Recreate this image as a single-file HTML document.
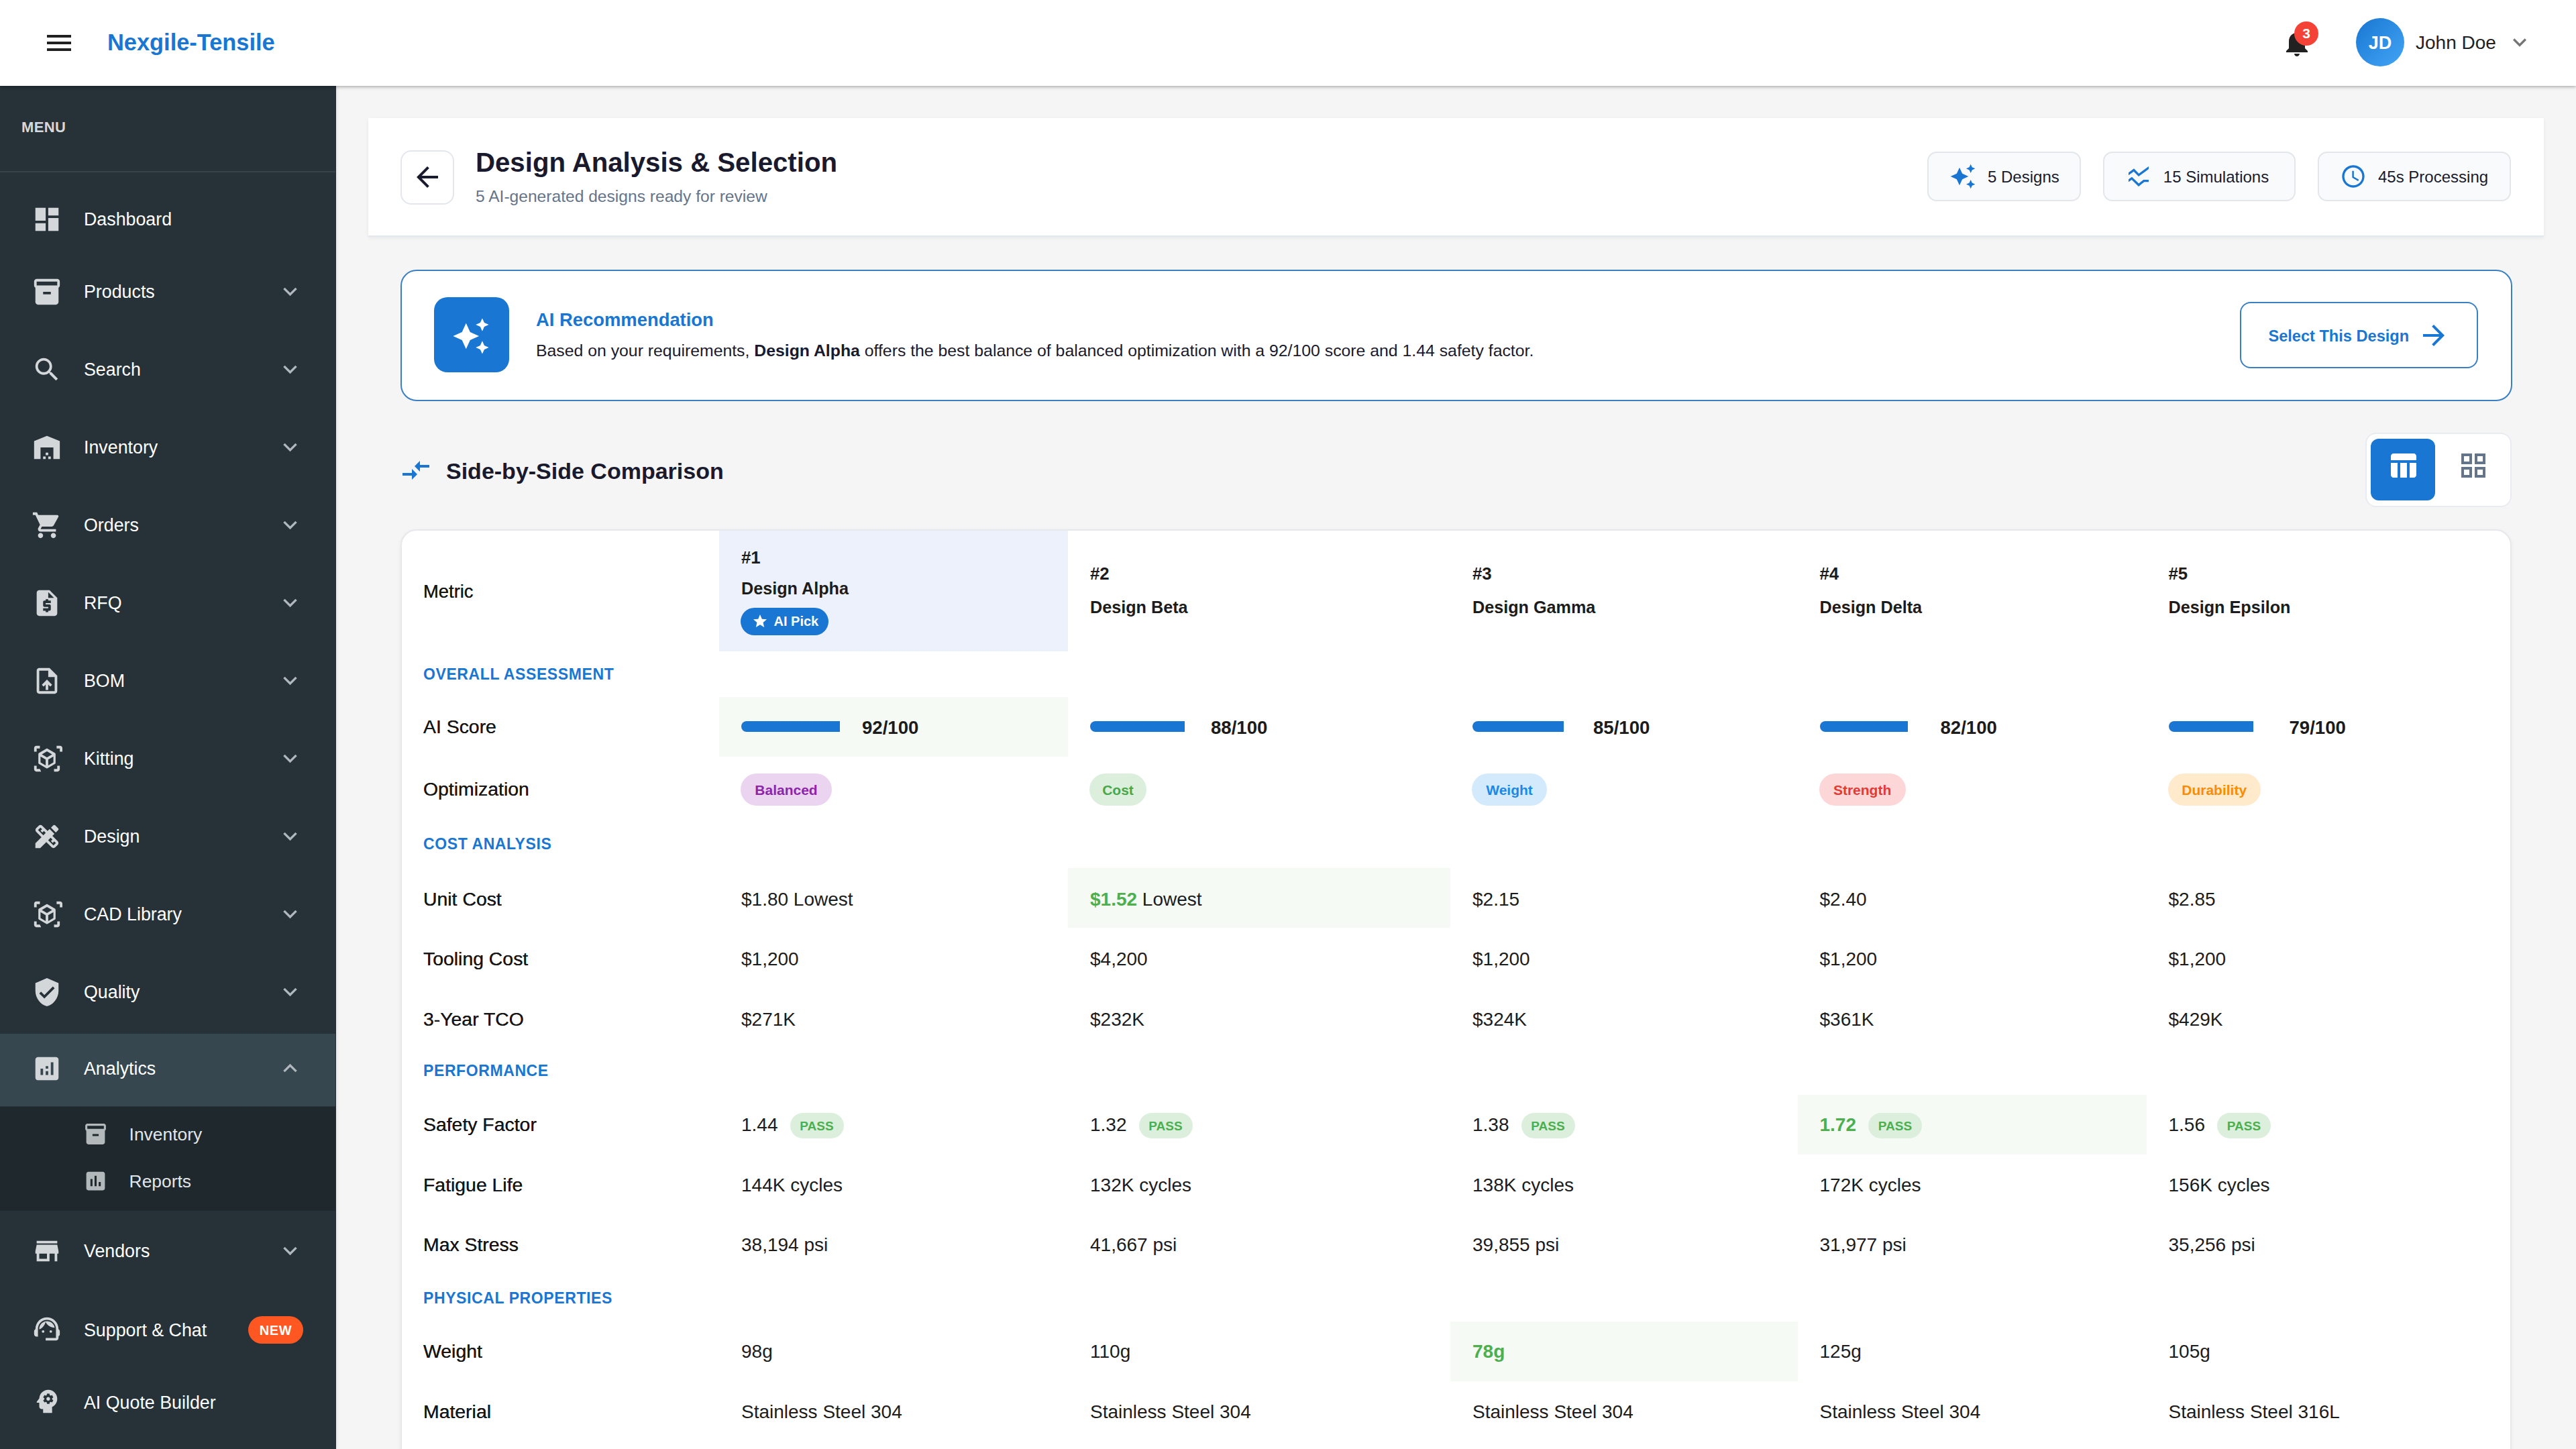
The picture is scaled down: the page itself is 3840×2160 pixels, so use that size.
<!DOCTYPE html>
<html>
<head>
<meta charset="utf-8">
<style>
html { zoom: 2; }
@media (max-width: 2500px) { html { zoom: 1; } }
html, body { margin: 0; padding: 0; width: 1920px; height: 1080px; overflow: hidden; background: #f5f5f5; }
body { font-family: "Liberation Sans", sans-serif; color: #1a1a2e; position: relative; }
.abs { position: absolute; }
svg { display: block; }
.nw { white-space: nowrap; }

/* header */
#hdr { position: absolute; left: 0; top: 0; width: 1920px; height: 64px; background: #fff; z-index: 5;
  box-shadow: 0 0.5px 3px rgba(0,0,0,0.28), 0 1px 1.5px rgba(0,0,0,0.08); }
.bar { position: absolute; left: 35px; width: 18px; height: 2px; background: #212121; }

/* sidebar */
#side { position: absolute; left: 0; top: 64px; width: 250.5px; height: 1016px; background: #263238; z-index: 3; box-shadow: 1px 0 2px rgba(0,0,0,0.07); }
#side .menu { position: absolute; left: 16px; top: 23.2px; font-size: 11px; line-height: 16px; font-weight: 700; letter-spacing: 0.2px; color: #d5d9dd; }
#side .div { position: absolute; left: 0; top: 63.5px; width: 250px; height: 1px; background: #34424a; }
.item { position: absolute; left: 0; width: 250px; height: 54px; }
.item.act { background: #37474f; }
.item .ic { position: absolute; left: 23.6px; top: 14.25px; width: 23px; height: 23px; fill: #d4d7da; }
.item .tx { position: absolute; left: 62.5px; top: -1px; line-height: 54px; font-size: 13.4px; color: #fff; white-space: nowrap; }
.item .chev { position: absolute; left: 206px; top: 15.5px; width: 20.5px; height: 20.5px; fill: #b0b8bd; }
.newb { position: absolute; left: 185px; top: 16.5px; width: 41px; height: 20.5px; border-radius: 10.25px; background: #ff5722; color: #fff; font-size: 10px; font-weight: 700; line-height: 21.5px; text-align: center; letter-spacing: 0.3px; }
.sub { position: absolute; left: 0; width: 250px; height: 77.25px; background: #1e282d; }
.sitem { position: absolute; left: 0; width: 250px; height: 35px; }
.sic { position: absolute; left: 61.8px; top: 11.1px; width: 18.5px; height: 18.5px; fill: #b3b8bb; }
.stx { position: absolute; left: 96.3px; top: 10.3px; font-size: 13.2px; line-height: 20px; color: #e3e6e9; white-space: nowrap; }
.t { position: absolute; white-space: nowrap; }
.pass { display: inline-block; vertical-align: 0.5px; margin-left: 9px; width: 40px; height: 19px; border-radius: 9.5px; background: #dbefdc; color: #4caf50; font-size: 9.5px; font-weight: 700; line-height: 20px; text-align: center; }

.item.lo .tx { top: 0px; }

</style>
</head>
<body>
<div id="hdr">
  <div class="bar" style="top:26px"></div>
  <div class="bar" style="top:31px"></div>
  <div class="bar" style="top:36px"></div>
  <div class="abs nw" style="left:80px; top:19.5px; font-size:17.2px; line-height:24px; font-weight:700; color:#1976d2;">Nexgile-Tensile</div>
  <svg class="abs" style="left:1700px; top:20px; width:24px; height:24px; fill:#212121" viewBox="0 0 24 24"><path d="M12 22c1.1 0 2-.9 2-2h-4c0 1.1.89 2 2 2m6-6v-5c0-3.07-1.64-5.64-4.5-6.32V4c0-.83-.67-1.5-1.5-1.5s-1.5.67-1.5 1.5v.68C7.63 5.36 6 7.92 6 11v5l-2 2v1h16v-1z"/></svg>
  <div class="abs" style="left:1710px; top:16px; width:18px; height:18px; border-radius:9px; background:#f44336; color:#fff; font-size:10.5px; font-weight:700; line-height:18px; text-align:center;">3</div>
  <div class="abs" style="left:1756px; top:13.65px; width:36px; height:36px; border-radius:18px; background:linear-gradient(135deg,#1976d2 0%,#42a5f5 100%); color:#fff; font-size:13.5px; font-weight:700; line-height:37px; text-align:center;">JD</div>
  <div class="abs nw" style="left:1800.5px; top:22px; font-size:14px; line-height:20px; color:#212121;">John Doe</div>
  <svg class="abs" style="left:1868px; top:21.25px; width:20px; height:20px; fill:#757575" viewBox="0 0 24 24"><path d="M16.59 8.59 12 13.17 7.41 8.59 6 10l6 6 6-6z"/></svg>
</div>

<div id="side">
<div class="menu">MENU</div>
<div class="div"></div>
<div class="item" style="top:73.5px"><svg class="ic" viewBox="0 0 24 24"><path d="M3 13h8V3H3zm0 8h8v-6H3zm10 0h8V11h-8zm0-18v6h8V3z"/></svg><div class="tx">Dashboard</div></div>
<div class="item" style="top:127.5px"><svg class="ic" viewBox="0 0 24 24"><path d="M20 2H4c-1 0-2 .9-2 2v3.01c0 .72.43 1.34 1 1.69V20c0 1.1 1.1 2 2 2h14c.9 0 2-.9 2-2V8.7c.57-.35 1-.97 1-1.69V4c0-1.1-1-2-2-2m-5 12H9v-2h6zm5-7H4V4l16-.02z"/></svg><div class="tx">Products</div><svg class="chev" viewBox="0 0 24 24"><path d="M16.59 8.59 12 13.17 7.41 8.59 6 10l6 6 6-6z"/></svg></div>
<div class="item" style="top:185.5px"><svg class="ic" viewBox="0 0 24 24"><path d="M15.5 14h-.79l-.28-.27C15.41 12.59 16 11.11 16 9.5 16 5.91 13.09 3 9.5 3S3 5.91 3 9.5 5.91 16 9.5 16c1.61 0 3.09-.59 4.23-1.57l.27.28v.79l5 4.99L20.49 19zm-6 0C7.01 14 5 11.99 5 9.5S7.01 5 9.5 5 14 7.01 14 9.5 11.99 14 9.5 14"/></svg><div class="tx">Search</div><svg class="chev" viewBox="0 0 24 24"><path d="M16.59 8.59 12 13.17 7.41 8.59 6 10l6 6 6-6z"/></svg></div>
<div class="item" style="top:243.5px"><svg class="ic" viewBox="0 0 24 24"><path d="M22 21V7L12 3 2 7v14h5v-9h10v9zm-11-2H9v2h2zm2-3h-2v2h2zm2 3h-2v2h2z"/></svg><div class="tx">Inventory</div><svg class="chev" viewBox="0 0 24 24"><path d="M16.59 8.59 12 13.17 7.41 8.59 6 10l6 6 6-6z"/></svg></div>
<div class="item" style="top:301.5px"><svg class="ic" viewBox="0 0 24 24"><path d="M7 18c-1.1 0-1.99.9-1.99 2S5.9 22 7 22s2-.9 2-2-.9-2-2-2M1 2v2h2l3.6 7.59-1.35 2.45c-.16.28-.25.61-.25.96 0 1.1.9 2 2 2h12v-2H7.42c-.14 0-.25-.11-.25-.25l.03-.12.9-1.63h7.45c.75 0 1.41-.41 1.75-1.03l3.58-6.49c.08-.14.12-.31.12-.48 0-.55-.45-1-1-1H5.21l-.94-2zm16 16c-1.1 0-1.99.9-1.99 2s.89 2 1.99 2 2-.9 2-2-.9-2-2-2"/></svg><div class="tx">Orders</div><svg class="chev" viewBox="0 0 24 24"><path d="M16.59 8.59 12 13.17 7.41 8.59 6 10l6 6 6-6z"/></svg></div>
<div class="item" style="top:359.5px"><svg class="ic" viewBox="0 0 24 24"><path d="M14 2H6c-1.1 0-1.99.9-1.99 2L4 20c0 1.1.89 2 1.99 2H18c1.1 0 2-.9 2-2V8zm1 10h-4v1h3c.55 0 1 .45 1 1v3c0 .55-.45 1-1 1h-1v1h-2v-1H9v-2h4v-1h-3c-.55 0-1-.45-1-1v-3c0-.55.45-1 1-1h1V9h2v1h2zm-2-4V3.5L17.5 8z"/></svg><div class="tx">RFQ</div><svg class="chev" viewBox="0 0 24 24"><path d="M16.59 8.59 12 13.17 7.41 8.59 6 10l6 6 6-6z"/></svg></div>
<div class="item" style="top:417.5px"><svg class="ic" viewBox="0 0 24 24"><path d="M14 2H6c-1.1 0-1.99.9-1.99 2L4 20c0 1.1.89 2 1.99 2H18c1.1 0 2-.9 2-2V8zm4 18H6V4h7v5h5zM8 15.01l1.41 1.41L11 14.84V19h2v-4.16l1.59 1.59L16 15.01 12.01 11z"/></svg><div class="tx">BOM</div><svg class="chev" viewBox="0 0 24 24"><path d="M16.59 8.59 12 13.17 7.41 8.59 6 10l6 6 6-6z"/></svg></div>
<div class="item" style="top:475.5px"><svg class="ic" viewBox="0 0 24 24"><path d="M18.25 7.6 12.45 4.2c-.28-.16-.62-.16-.9 0L5.75 7.6c-.28.16-.45.46-.45.79v6.82c0 .33.17.63.45.79l5.8 3.4c.28.16.62.16.9 0l5.8-3.4c.28-.16.45-.46.45-.79V8.39c0-.33-.17-.63-.45-.79M11 17.25l-4-2.34v-4.6l4 2.34zm1-6.29L8.02 8.6 12 6.24l3.98 2.36zm5 3.95-4 2.34v-4.6l4-2.34zM2 6.5V3.75C2 2.78 2.78 2 3.75 2H6.5v2H4v2.5zm5.5 15.5H3.75C2.78 22 2 21.22 2 20.25V17.5h2V20h2.5zm12-20h2.75c.97 0 1.75.78 1.75 1.75V6.5h-2V4h-2.5zm2.5 15.5v2.75c0 .97-.78 1.75-1.75 1.75H17.5v-2H20v-2.5z"/></svg><div class="tx">Kitting</div><svg class="chev" viewBox="0 0 24 24"><path d="M16.59 8.59 12 13.17 7.41 8.59 6 10l6 6 6-6z"/></svg></div>
<div class="item" style="top:533.5px"><svg class="ic" viewBox="0 0 24 24"><path d="M16.24 11.51l1.57-1.57-3.75-3.75-1.57 1.57-4.14-4.13c-.78-.78-2.05-.78-2.83 0l-1.9 1.9c-.78.78-.78 2.05 0 2.83l4.13 4.13L3 17.25V21h3.75l4.76-4.76 4.13 4.13c.95.95 2.23.6 2.83 0l1.9-1.9c.78-.78.78-2.05 0-2.83zm-7.06-.44L5.04 6.94l1.89-1.9L8.2 6.31 7.02 7.5l1.41 1.41 1.19-1.19 1.45 1.45zm7.88 7.89-4.13-4.13 1.9-1.9 1.45 1.45-1.19 1.19 1.41 1.41 1.19-1.19 1.27 1.27zm3.65-11.92c.39-.39.39-1.02 0-1.41l-2.34-2.34c-.47-.47-1.12-.29-1.41 0l-1.83 1.83 3.75 3.75z"/></svg><div class="tx">Design</div><svg class="chev" viewBox="0 0 24 24"><path d="M16.59 8.59 12 13.17 7.41 8.59 6 10l6 6 6-6z"/></svg></div>
<div class="item" style="top:591.5px"><svg class="ic" viewBox="0 0 24 24"><path d="M18.25 7.6 12.45 4.2c-.28-.16-.62-.16-.9 0L5.75 7.6c-.28.16-.45.46-.45.79v6.82c0 .33.17.63.45.79l5.8 3.4c.28.16.62.16.9 0l5.8-3.4c.28-.16.45-.46.45-.79V8.39c0-.33-.17-.63-.45-.79M11 17.25l-4-2.34v-4.6l4 2.34zm1-6.29L8.02 8.6 12 6.24l3.98 2.36zm5 3.95-4 2.34v-4.6l4-2.34zM2 6.5V3.75C2 2.78 2.78 2 3.75 2H6.5v2H4v2.5zm5.5 15.5H3.75C2.78 22 2 21.22 2 20.25V17.5h2V20h2.5zm12-20h2.75c.97 0 1.75.78 1.75 1.75V6.5h-2V4h-2.5zm2.5 15.5v2.75c0 .97-.78 1.75-1.75 1.75H17.5v-2H20v-2.5z"/></svg><div class="tx">CAD Library</div><svg class="chev" viewBox="0 0 24 24"><path d="M16.59 8.59 12 13.17 7.41 8.59 6 10l6 6 6-6z"/></svg></div>
<div class="item" style="top:649.5px"><svg class="ic" viewBox="0 0 24 24"><path d="M12 1 3 5v6c0 5.55 3.84 10.74 9 12 5.16-1.26 9-6.45 9-12V5zm-2 16-4-4 1.41-1.41L10 14.17l6.59-6.59L18 9z"/></svg><div class="tx">Quality</div><svg class="chev" viewBox="0 0 24 24"><path d="M16.59 8.59 12 13.17 7.41 8.59 6 10l6 6 6-6z"/></svg></div>
<div class="item act" style="top:706.5px"><svg class="ic" viewBox="0 0 24 24"><path d="M19 3H5c-1.1 0-2 .9-2 2v14c0 1.1.9 2 2 2h14c1.1 0 2-.9 2-2V5c0-1.1-.9-2-2-2M9 17H7v-5h2zm4 0h-2v-3h2zm0-5h-2v-2h2zm4 5h-2V7h2z"/></svg><div class="tx">Analytics</div><svg class="chev" viewBox="0 0 24 24"><path d="m12 8-6 6 1.41 1.41L12 10.83l4.59 4.58L18 14z"/></svg></div>
<div class="item" style="top:842.5px"><svg class="ic" viewBox="0 0 24 24"><path d="M20 4H4v2h16zm1 10v-2l-1-5H4l-1 5v2h1v6h10v-6h4v6h2v-6zm-9 4H6v-4h6z"/></svg><div class="tx">Vendors</div><svg class="chev" viewBox="0 0 24 24"><path d="M16.59 8.59 12 13.17 7.41 8.59 6 10l6 6 6-6z"/></svg></div>
<div class="item lo" style="top:900.5px"><svg class="ic" viewBox="0 0 24 24"><path d="M21 12.22C21 6.73 16.74 3 12 3c-4.69 0-9 3.65-9 9.28-.6.34-1 .98-1 1.72v2c0 1.1.9 2 2 2h1v-6.1c0-3.87 3.13-7 7-7s7 3.13 7 7V19h-8v2h8c1.1 0 2-.9 2-2v-1.22c.59-.31 1-.92 1-1.64v-2.3c0-.7-.41-1.31-1-1.62M9 13a1 1 0 1 0 0 2 1 1 0 1 0 0-2m6 0a1 1 0 1 0 0 2 1 1 0 1 0 0-2M18 11.03C17.52 8.18 15.04 6 12.05 6c-3.03 0-6.29 2.51-6.03 6.45 2.47-1.01 4.33-3.21 4.86-5.89 1.31 2.63 4 4.44 7.12 4.47"/></svg><div class="tx">Support &amp; Chat</div><div class="newb">NEW</div></div>
<div class="item lo" style="top:954.5px"><svg class="ic" viewBox="0 0 24 24"><path d="M13 8.57c-.79 0-1.43.64-1.43 1.43s.64 1.43 1.43 1.43 1.43-.64 1.43-1.43-.64-1.43-1.43-1.43M13 3C9.25 3 6.2 5.94 6.02 9.64L4.1 12.2c-.25.33 0 .8.4.8H6v3c0 1.1.9 2 2 2h1v3h7v-4.68c2.36-1.12 4-3.53 4-6.32 0-3.87-3.13-7-7-7m3 7c0 .13-.01.26-.02.39l.83.66c.08.06.1.16.05.25l-.8 1.39c-.05.09-.16.12-.24.09l-.99-.4c-.21.16-.43.29-.67.39L14 13.83c-.01.1-.1.17-.2.17h-1.6c-.1 0-.18-.07-.2-.17l-.15-1.06c-.25-.1-.47-.23-.68-.39l-.99.4c-.09.03-.2 0-.25-.09l-.8-1.39c-.05-.08-.03-.19.05-.25l.84-.66c-.01-.13-.02-.26-.02-.39s.02-.27.04-.39l-.85-.66c-.08-.06-.1-.16-.05-.26l.8-1.38c.05-.09.15-.12.24-.09l1 .4c.2-.15.43-.29.67-.39L12 6.17c.02-.1.1-.17.2-.17h1.6c.1 0 .18.07.19.17l.15 1.06c.24.1.46.23.67.39l1-.4c.09-.03.2 0 .24.09l.8 1.38c.05.09.03.2-.05.26l-.85.66c.03.12.04.25.04.39"/></svg><div class="tx">AI Quote Builder</div></div>
<div class="sub" style="top:761px"><div class="sitem" style="top:0px"><svg class="sic" viewBox="0 0 24 24"><path d="M20 2H4c-1 0-2 .9-2 2v3.01c0 .72.43 1.34 1 1.69V20c0 1.1 1.1 2 2 2h14c.9 0 2-.9 2-2V8.7c.57-.35 1-.97 1-1.69V4c0-1.1-1-2-2-2m-5 12H9v-2h6zm5-7H4V4l16-.02z"/></svg><div class="stx">Inventory</div></div><div class="sitem" style="top:35px"><svg class="sic" viewBox="0 0 24 24"><path d="M19 3H5c-1.1 0-2 .9-2 2v14c0 1.1.9 2 2 2h14c1.1 0 2-.9 2-2V5c0-1.1-.9-2-2-2M9 17H7v-7h2zm4 0h-2V7h2zm4 0h-2v-4h2z"/></svg><div class="stx">Reports</div></div></div>
</div>
<div class="abs" style="left:274.5px;top:88px;width:1621.5px;height:87.5px;background:#fff;border-bottom:1px solid #e3e8ef;box-shadow:0 1px 3px rgba(15,23,42,0.06);"></div>
<div class="abs" style="left:298.5px;top:112px;width:38px;height:38.5px;border:1px solid #e3e7ec;border-radius:8px;background:#fff;"></div>
<svg class="abs" style="left:306.3px;top:120px;width:24px;height:24px;fill:#1a1a2e" viewBox="0 0 24 24"><path d="M20 11H7.83l5.59-5.59L12 4l-8 8 8 8 1.41-1.41L7.83 13H20z"/></svg>
<div class="t" style="left:354.5px;top:108.47px;font-size:20.1px;line-height:26.13px;font-weight:700;color:#1a1a2e;">Design Analysis &amp; Selection</div>
<div class="t" style="left:354.5px;top:138.69px;font-size:12.3px;line-height:15.99px;color:#64748b;">5 AI-generated designs ready for review</div>
<div class="abs" style="left:1436.4px;top:113px;width:112.4px;height:35.2px;border:1px solid #e3e6ea;border-radius:7px;background:#f9fafb;"></div>
<svg class="abs" style="left:1453.2px;top:121.6px;width:20px;height:20px;fill:#1976d2" viewBox="0 0 24 24"><path d="m19 9 1.25-2.75L23 5l-2.75-1.25L19 1l-1.25 2.75L15 5l2.75 1.25zm-7.5.5L9 4 6.5 9.5 1 12l5.5 2.5L9 20l2.5-5.5L17 12zM19 15l-1.25 2.75L15 19l2.75 1.25L19 23l1.25-2.75L23 19l-2.75-1.25z"/></svg>
<div class="t" style="left:1481.5px;top:124.04px;font-size:12px;line-height:15.6px;color:#1a1a2e;">5 Designs</div>
<div class="abs" style="left:1567.6px;top:113px;width:141.3px;height:35.2px;border:1px solid #e3e6ea;border-radius:7px;background:#f9fafb;"></div>
<svg class="abs" style="left:1584px;top:121.6px;width:20px;height:20px;fill:#1976d2" viewBox="0 0 24 24"><path d="M21 5.47 12 12 7.62 7.62 3 11V8.52L7.83 5l4.38 4.38L21 3zM21 15h-4.7l-4.17 3.34L6 12.41l-3 2.13V17l2.8-2 6.2 6 5-4h4z"/></svg>
<div class="t" style="left:1612.4px;top:124.04px;font-size:12px;line-height:15.6px;color:#1a1a2e;">15 Simulations</div>
<div class="abs" style="left:1727.5px;top:113px;width:142.0px;height:35.2px;border:1px solid #e3e6ea;border-radius:7px;background:#f9fafb;"></div>
<svg class="abs" style="left:1744.15px;top:121.6px;width:20px;height:20px;fill:#1976d2" viewBox="0 0 24 24"><path d="M11.99 2C6.47 2 2 6.48 2 12s4.47 10 9.99 10C17.52 22 22 17.52 22 12S17.52 2 11.99 2M12 20c-4.42 0-8-3.58-8-8s3.58-8 8-8 8 3.58 8 8-3.58 8-8 8M12.5 7H11v6l5.25 3.15.75-1.23-4.5-2.67z"/></svg>
<div class="t" style="left:1772.5px;top:124.04px;font-size:12px;line-height:15.6px;color:#1a1a2e;">45s Processing</div>
<div class="abs" style="left:298.5px;top:200.75px;width:1572px;height:96.25px;border:1px solid #3a7fc4;border-radius:12px;background:#fff;"></div>
<div class="abs" style="left:323.5px;top:221.5px;width:56px;height:56px;border-radius:10px;background:#1976d2;"></div>
<svg class="abs" style="left:336.65px;top:235.75px;width:29px;height:29px;fill:#fff" viewBox="0 0 24 24"><path d="m19 9 1.25-2.75L23 5l-2.75-1.25L19 1l-1.25 2.75L15 5l2.75 1.25zm-7.5.5L9 4 6.5 9.5 1 12l5.5 2.5L9 20l2.5-5.5L17 12zM19 15l-1.25 2.75L15 19l2.75 1.25L19 23l1.25-2.75L23 19l-2.75-1.25z"/></svg>
<div class="t" style="left:399.5px;top:229.35px;font-size:13.7px;line-height:17.81px;font-weight:700;color:#1976d2;">AI Recommendation</div>
<div class="t" style="left:399.5px;top:253.64px;font-size:12.4px;line-height:16.12px;color:#1a1a2e;">Based on your requirements, <b>Design Alpha</b> offers the best balance of balanced optimization with a 92/100 score and 1.44 safety factor.</div>
<div class="abs" style="left:1669.5px;top:225px;width:175.5px;height:47.5px;border:1px solid #3a7fc4;border-radius:8px;"></div>
<div class="t" style="left:1690.7px;top:243.24px;font-size:11.8px;line-height:15.34px;font-weight:700;color:#1976d2;">Select This Design</div>
<svg class="abs" style="left:1801.8px;top:237.9px;width:24px;height:24px;fill:#1976d2" viewBox="0 0 24 24"><path d="m12 4-1.41 1.41L16.17 11H4v2h12.17l-5.58 5.59L12 20l8-8z"/></svg>
<svg class="abs" style="left:298px;top:338.5px;width:24px;height:24px;fill:#1976d2" viewBox="0 0 24 24"><path d="M9.01 14H2v2h7.01v3L13 15l-3.99-4zm5.98-1v-3H22V8h-7.01V5L11 9z"/></svg>
<div class="t" style="left:332.5px;top:340.06px;font-size:17px;line-height:22.1px;font-weight:700;color:#1a1a2e;">Side-by-Side Comparison</div>
<div class="abs" style="left:1763px;top:322.5px;width:107px;height:53.5px;border:1px solid #e8ebef;border-radius:8px;background:#fff;"></div>
<div class="abs" style="left:1767px;top:327px;width:48px;height:46px;border-radius:6px;background:#1976d2;"></div>
<svg class="abs" style="left:1779px;top:335px;width:24px;height:24px;fill:#fff" viewBox="0 0 24 24"><path d="M10 10.02h5V21h-5zM17 21h3c1.1 0 2-.9 2-2v-9h-5zm3-18H5c-1.1 0-2 .9-2 2v3h19V5c0-1.1-.9-2-2-2M3 19c0 1.1.9 2 2 2h3V10H3z"/></svg>
<svg class="abs" style="left:1831.3px;top:335.1px;width:24px;height:24px;fill:#64748b" viewBox="0 0 24 24"><path d="M3 3v8h8V3zm6 6H5V5h4zm-6 4v8h8v-8zm6 6H5v-4h4zm4-16v8h8V3zm6 6h-4V5h4zm-6 4v8h8v-8zm6 6h-4v-4h4z"/></svg><div class="abs" style="left:298.5px;top:394.25px;width:1571.5px;height:720px;background:#fff;border:1px solid #e6e8ec;border-radius:12px;box-shadow:0 1px 3px rgba(15,23,42,0.05);overflow:hidden;"><div class="abs" style="left:236.5px;top:0;width:260px;height:90.2px;background:#edf1fb;"></div></div>
<div class="abs" style="left:536px;top:519.25px;width:260.00px;height:44.50px;background:#f5faf5;"></div>
<div class="abs" style="left:796px;top:646.8px;width:285.00px;height:44.50px;background:#f5faf5;"></div>
<div class="abs" style="left:1339.75px;top:816px;width:260.00px;height:44.50px;background:#f5faf5;"></div>
<div class="abs" style="left:1081px;top:985.2px;width:258.75px;height:44.50px;background:#f5faf5;"></div>
<div class="t" style="left:315.5px;top:431.85px;font-size:13.7px;line-height:17.81px;color:#161616;text-shadow:0 0 0.3px currentColor;">Metric</div>
<div class="t" style="left:552.5px;top:407.65px;font-size:12.9px;line-height:16.77px;font-weight:700;color:#1c1c1c;">#1</div>
<div class="t" style="left:552.5px;top:430.44px;font-size:12.6px;line-height:16.38px;font-weight:700;color:#1c1c1c;">Design Alpha</div>
<div class="abs" style="left:552px;top:452.75px;width:65.5px;height:20.75px;border-radius:10.4px;background:#1976d2;"></div>
<svg class="abs" style="left:560.4px;top:457.2px;width:12px;height:12px;fill:#fff" viewBox="0 0 24 24"><path d="M12 17.27 18.18 21l-1.64-7.03L22 9.24l-7.19-.61L12 2 9.19 8.63 2 9.24l5.46 4.73L5.82 21z"/></svg>
<div class="t" style="left:576.75px;top:456.54px;font-size:10px;line-height:13.0px;font-weight:700;color:#fff;">AI Pick</div>
<div class="t" style="left:812.5px;top:419.65px;font-size:12.9px;line-height:16.77px;font-weight:700;color:#1c1c1c;">#2</div>
<div class="t" style="left:812.5px;top:444.44px;font-size:12.6px;line-height:16.38px;font-weight:700;color:#1c1c1c;">Design Beta</div>
<div class="t" style="left:1097.5px;top:419.65px;font-size:12.9px;line-height:16.77px;font-weight:700;color:#1c1c1c;">#3</div>
<div class="t" style="left:1097.5px;top:444.44px;font-size:12.6px;line-height:16.38px;font-weight:700;color:#1c1c1c;">Design Gamma</div>
<div class="t" style="left:1356.25px;top:419.65px;font-size:12.9px;line-height:16.77px;font-weight:700;color:#1c1c1c;">#4</div>
<div class="t" style="left:1356.25px;top:444.44px;font-size:12.6px;line-height:16.38px;font-weight:700;color:#1c1c1c;">Design Delta</div>
<div class="t" style="left:1616.25px;top:419.65px;font-size:12.9px;line-height:16.77px;font-weight:700;color:#1c1c1c;">#5</div>
<div class="t" style="left:1616.25px;top:444.44px;font-size:12.6px;line-height:16.38px;font-weight:700;color:#1c1c1c;">Design Epsilon</div>
<div class="t" style="left:315.5px;top:495.29px;font-size:11.5px;line-height:14.95px;font-weight:700;color:#1976d2;letter-spacing:0.3px;">OVERALL ASSESSMENT</div>
<div class="t" style="left:315.5px;top:622.04px;font-size:11.5px;line-height:14.95px;font-weight:700;color:#1976d2;letter-spacing:0.3px;">COST ANALYSIS</div>
<div class="t" style="left:315.5px;top:791.04px;font-size:11.5px;line-height:14.95px;font-weight:700;color:#1976d2;letter-spacing:0.3px;">PERFORMANCE</div>
<div class="t" style="left:315.5px;top:960.54px;font-size:11.5px;line-height:14.95px;font-weight:700;color:#1976d2;letter-spacing:0.3px;">PHYSICAL PROPERTIES</div>
<div class="t" style="left:315.5px;top:532.35px;font-size:14.2px;line-height:18.46px;color:#161616;text-shadow:0 0 0.3px currentColor;">AI Score</div>
<div class="abs" style="left:552.5px;top:537.5px;width:73.6px;height:8px;border-radius:4px 0 0 4px;background:#1976d2;"></div>
<div class="t" style="left:642.5px;top:533.25px;font-size:13.8px;line-height:17.94px;font-weight:700;color:#1c1c1c;">92/100</div>
<div class="abs" style="left:812.5px;top:537.5px;width:70.4px;height:8px;border-radius:4px 0 0 4px;background:#1976d2;"></div>
<div class="t" style="left:902.5px;top:533.25px;font-size:13.8px;line-height:17.94px;font-weight:700;color:#1c1c1c;">88/100</div>
<div class="abs" style="left:1097.5px;top:537.5px;width:68.0px;height:8px;border-radius:4px 0 0 4px;background:#1976d2;"></div>
<div class="t" style="left:1187.5px;top:533.25px;font-size:13.8px;line-height:17.94px;font-weight:700;color:#1c1c1c;">85/100</div>
<div class="abs" style="left:1356.25px;top:537.5px;width:65.6px;height:8px;border-radius:4px 0 0 4px;background:#1976d2;"></div>
<div class="t" style="left:1446.25px;top:533.25px;font-size:13.8px;line-height:17.94px;font-weight:700;color:#1c1c1c;">82/100</div>
<div class="abs" style="left:1616.25px;top:537.5px;width:63.2px;height:8px;border-radius:4px 0 0 4px;background:#1976d2;"></div>
<div class="t" style="left:1706.25px;top:533.25px;font-size:13.8px;line-height:17.94px;font-weight:700;color:#1c1c1c;">79/100</div>
<div class="t" style="left:315.5px;top:578.85px;font-size:14.2px;line-height:18.46px;color:#161616;text-shadow:0 0 0.3px currentColor;">Optimization</div>
<div class="abs" style="left:552.0px;top:576.5px;width:68px;height:24px;border-radius:12px;background:#ebd4ef;color:#8e24aa;font-size:10.5px;font-weight:700;line-height:25px;text-align:center;">Balanced</div>
<div class="abs" style="left:812.0px;top:576.5px;width:42.5px;height:24px;border-radius:12px;background:#dbefdc;color:#46a84b;font-size:10.5px;font-weight:700;line-height:25px;text-align:center;">Cost</div>
<div class="abs" style="left:1097.0px;top:576.5px;width:56px;height:24px;border-radius:12px;background:#d3eafd;color:#1e88e5;font-size:10.5px;font-weight:700;line-height:25px;text-align:center;">Weight</div>
<div class="abs" style="left:1355.75px;top:576.5px;width:64.6px;height:24px;border-radius:12px;background:#fdd7d7;color:#e53935;font-size:10.5px;font-weight:700;line-height:25px;text-align:center;">Strength</div>
<div class="abs" style="left:1615.75px;top:576.5px;width:69.2px;height:24px;border-radius:12px;background:#ffeacc;color:#fb8c00;font-size:10.5px;font-weight:700;line-height:25px;text-align:center;">Durability</div>
<div class="t" style="left:315.5px;top:660.85px;font-size:14.2px;line-height:18.46px;color:#161616;text-shadow:0 0 0.3px currentColor;">Unit Cost</div>
<div class="t" style="left:552.5px;top:661.55px;font-size:14px;line-height:18.2px;color:#1c1c1c;">$1.80 Lowest</div>
<div class="t" style="left:812.5px;top:661.55px;font-size:14px;line-height:18.2px;color:#1c1c1c;"><b style="color:#4caf50">$1.52</b> Lowest</div>
<div class="t" style="left:1097.5px;top:661.55px;font-size:14px;line-height:18.2px;color:#1c1c1c;">$2.15</div>
<div class="t" style="left:1356.25px;top:661.55px;font-size:14px;line-height:18.2px;color:#1c1c1c;">$2.40</div>
<div class="t" style="left:1616.25px;top:661.55px;font-size:14px;line-height:18.2px;color:#1c1c1c;">$2.85</div>
<div class="t" style="left:315.5px;top:705.35px;font-size:14.2px;line-height:18.46px;color:#161616;text-shadow:0 0 0.3px currentColor;">Tooling Cost</div>
<div class="t" style="left:552.5px;top:706.05px;font-size:14px;line-height:18.2px;color:#1c1c1c;">$1,200</div>
<div class="t" style="left:812.5px;top:706.05px;font-size:14px;line-height:18.2px;color:#1c1c1c;">$4,200</div>
<div class="t" style="left:1097.5px;top:706.05px;font-size:14px;line-height:18.2px;color:#1c1c1c;">$1,200</div>
<div class="t" style="left:1356.25px;top:706.05px;font-size:14px;line-height:18.2px;color:#1c1c1c;">$1,200</div>
<div class="t" style="left:1616.25px;top:706.05px;font-size:14px;line-height:18.2px;color:#1c1c1c;">$1,200</div>
<div class="t" style="left:315.5px;top:750.35px;font-size:14.2px;line-height:18.46px;color:#161616;text-shadow:0 0 0.3px currentColor;">3-Year TCO</div>
<div class="t" style="left:552.5px;top:751.05px;font-size:14px;line-height:18.2px;color:#1c1c1c;">$271K</div>
<div class="t" style="left:812.5px;top:751.05px;font-size:14px;line-height:18.2px;color:#1c1c1c;">$232K</div>
<div class="t" style="left:1097.5px;top:751.05px;font-size:14px;line-height:18.2px;color:#1c1c1c;">$324K</div>
<div class="t" style="left:1356.25px;top:751.05px;font-size:14px;line-height:18.2px;color:#1c1c1c;">$361K</div>
<div class="t" style="left:1616.25px;top:751.05px;font-size:14px;line-height:18.2px;color:#1c1c1c;">$429K</div>
<div class="t" style="left:315.5px;top:828.85px;font-size:14.2px;line-height:18.46px;color:#161616;text-shadow:0 0 0.3px currentColor;">Safety Factor</div>
<div class="t" style="left:552.5px;top:829.55px;font-size:14px;line-height:18.2px;color:#1c1c1c;">1.44<span class="pass">PASS</span></div>
<div class="t" style="left:812.5px;top:829.55px;font-size:14px;line-height:18.2px;color:#1c1c1c;">1.32<span class="pass">PASS</span></div>
<div class="t" style="left:1097.5px;top:829.55px;font-size:14px;line-height:18.2px;color:#1c1c1c;">1.38<span class="pass">PASS</span></div>
<div class="t" style="left:1356.25px;top:829.55px;font-size:14px;line-height:18.2px;color:#1c1c1c;"><b style="color:#4caf50">1.72</b><span class="pass">PASS</span></div>
<div class="t" style="left:1616.25px;top:829.55px;font-size:14px;line-height:18.2px;color:#1c1c1c;">1.56<span class="pass">PASS</span></div>
<div class="t" style="left:315.5px;top:873.85px;font-size:14.2px;line-height:18.46px;color:#161616;text-shadow:0 0 0.3px currentColor;">Fatigue Life</div>
<div class="t" style="left:552.5px;top:874.55px;font-size:14px;line-height:18.2px;color:#1c1c1c;">144K cycles</div>
<div class="t" style="left:812.5px;top:874.55px;font-size:14px;line-height:18.2px;color:#1c1c1c;">132K cycles</div>
<div class="t" style="left:1097.5px;top:874.55px;font-size:14px;line-height:18.2px;color:#1c1c1c;">138K cycles</div>
<div class="t" style="left:1356.25px;top:874.55px;font-size:14px;line-height:18.2px;color:#1c1c1c;">172K cycles</div>
<div class="t" style="left:1616.25px;top:874.55px;font-size:14px;line-height:18.2px;color:#1c1c1c;">156K cycles</div>
<div class="t" style="left:315.5px;top:918.35px;font-size:14.2px;line-height:18.46px;color:#161616;text-shadow:0 0 0.3px currentColor;">Max Stress</div>
<div class="t" style="left:552.5px;top:919.05px;font-size:14px;line-height:18.2px;color:#1c1c1c;">38,194 psi</div>
<div class="t" style="left:812.5px;top:919.05px;font-size:14px;line-height:18.2px;color:#1c1c1c;">41,667 psi</div>
<div class="t" style="left:1097.5px;top:919.05px;font-size:14px;line-height:18.2px;color:#1c1c1c;">39,855 psi</div>
<div class="t" style="left:1356.25px;top:919.05px;font-size:14px;line-height:18.2px;color:#1c1c1c;">31,977 psi</div>
<div class="t" style="left:1616.25px;top:919.05px;font-size:14px;line-height:18.2px;color:#1c1c1c;">35,256 psi</div>
<div class="t" style="left:315.5px;top:997.85px;font-size:14.2px;line-height:18.46px;color:#161616;text-shadow:0 0 0.3px currentColor;">Weight</div>
<div class="t" style="left:552.5px;top:998.55px;font-size:14px;line-height:18.2px;color:#1c1c1c;">98g</div>
<div class="t" style="left:812.5px;top:998.55px;font-size:14px;line-height:18.2px;color:#1c1c1c;">110g</div>
<div class="t" style="left:1097.5px;top:998.55px;font-size:14px;line-height:18.2px;color:#1c1c1c;"><b style="color:#4caf50">78g</b></div>
<div class="t" style="left:1356.25px;top:998.55px;font-size:14px;line-height:18.2px;color:#1c1c1c;">125g</div>
<div class="t" style="left:1616.25px;top:998.55px;font-size:14px;line-height:18.2px;color:#1c1c1c;">105g</div>
<div class="t" style="left:315.5px;top:1042.85px;font-size:14.2px;line-height:18.46px;color:#161616;text-shadow:0 0 0.3px currentColor;">Material</div>
<div class="t" style="left:552.5px;top:1043.55px;font-size:14px;line-height:18.2px;color:#1c1c1c;">Stainless Steel 304</div>
<div class="t" style="left:812.5px;top:1043.55px;font-size:14px;line-height:18.2px;color:#1c1c1c;">Stainless Steel 304</div>
<div class="t" style="left:1097.5px;top:1043.55px;font-size:14px;line-height:18.2px;color:#1c1c1c;">Stainless Steel 304</div>
<div class="t" style="left:1356.25px;top:1043.55px;font-size:14px;line-height:18.2px;color:#1c1c1c;">Stainless Steel 304</div>
<div class="t" style="left:1616.25px;top:1043.55px;font-size:14px;line-height:18.2px;color:#1c1c1c;">Stainless Steel 316L</div>
</body>
</html>
